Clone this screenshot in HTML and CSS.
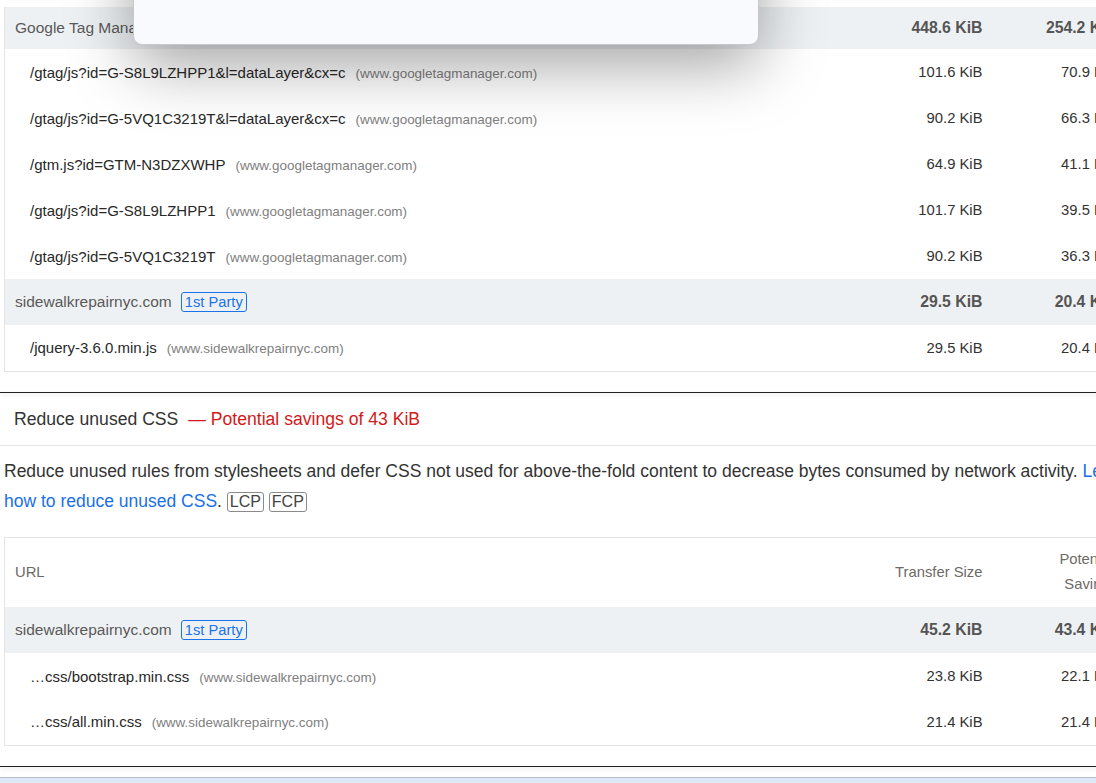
FILE: index.html
```html
<!DOCTYPE html>
<html>
<head>
<meta charset="utf-8">
<link rel="stylesheet" href="styles.css">
</head>
<body>
<div class="page">
  <div class="popup"></div>

  <section class="audit-tail">
    <table class="tbl">
      <colgroup><col class="c-url"><col class="c-num"><col class="c-sav"></colgroup>
      <tbody>
        <tr class="group first">
          <td class="url">Google Tag Manager</td>
          <td class="num">448.6 KiB</td>
          <td class="sav">254.2 KiB</td>
        </tr>
        <tr class="sub">
          <td class="url">/gtag/js?id=G-S8L9LZHPP1&amp;l=dataLayer&amp;cx=c<span class="host">(www.googletagmanager.com)</span></td>
          <td class="num">101.6 KiB</td>
          <td class="sav">70.9 KiB</td>
        </tr>
        <tr class="sub">
          <td class="url">/gtag/js?id=G-5VQ1C3219T&amp;l=dataLayer&amp;cx=c<span class="host">(www.googletagmanager.com)</span></td>
          <td class="num">90.2 KiB</td>
          <td class="sav">66.3 KiB</td>
        </tr>
        <tr class="sub">
          <td class="url">/gtm.js?id=GTM-N3DZXWHP<span class="host">(www.googletagmanager.com)</span></td>
          <td class="num">64.9 KiB</td>
          <td class="sav">41.1 KiB</td>
        </tr>
        <tr class="sub">
          <td class="url">/gtag/js?id=G-S8L9LZHPP1<span class="host">(www.googletagmanager.com)</span></td>
          <td class="num">101.7 KiB</td>
          <td class="sav">39.5 KiB</td>
        </tr>
        <tr class="sub">
          <td class="url">/gtag/js?id=G-5VQ1C3219T<span class="host">(www.googletagmanager.com)</span></td>
          <td class="num">90.2 KiB</td>
          <td class="sav">36.3 KiB</td>
        </tr>
        <tr class="group">
          <td class="url">sidewalkrepairnyc.com<span class="badge">1st Party</span></td>
          <td class="num">29.5 KiB</td>
          <td class="sav">20.4 KiB</td>
        </tr>
        <tr class="sub">
          <td class="url">/jquery-3.6.0.min.js<span class="host">(www.sidewalkrepairnyc.com)</span></td>
          <td class="num">29.5 KiB</td>
          <td class="sav">20.4 KiB</td>
        </tr>
      </tbody>
    </table>
  </section>

  <div class="sep"></div>

  <section class="audit">
    <div class="audit-head">
      <span class="title">Reduce unused CSS</span>
      <span class="savings">— Potential savings of 43 KiB</span>
    </div>
    <p class="desc">Reduce unused rules from stylesheets and defer CSS not used for above-the-fold content to decrease bytes consumed by network activity. <a class="link" href="#">Learn how to reduce unused CSS</a>. <span class="metric">LCP</span> <span class="metric">FCP</span></p>
    <table class="tbl">
      <colgroup><col class="c-url"><col class="c-num"><col class="c-sav"></colgroup>
      <thead>
        <tr class="head">
          <th class="url">URL</th>
          <th class="num">Transfer Size</th>
          <th class="sav">Potential Savings</th>
        </tr>
      </thead>
      <tbody>
        <tr class="group">
          <td class="url">sidewalkrepairnyc.com<span class="badge">1st Party</span></td>
          <td class="num">45.2 KiB</td>
          <td class="sav">43.4 KiB</td>
        </tr>
        <tr class="sub">
          <td class="url">…css/bootstrap.min.css<span class="host">(www.sidewalkrepairnyc.com)</span></td>
          <td class="num">23.8 KiB</td>
          <td class="sav">22.1 KiB</td>
        </tr>
        <tr class="sub">
          <td class="url">…css/all.min.css<span class="host">(www.sidewalkrepairnyc.com)</span></td>
          <td class="num">21.4 KiB</td>
          <td class="sav">21.4 KiB</td>
        </tr>
      </tbody>
    </table>
  </section>

  <div class="sep"></div>
  <div class="next"></div>
</div>
</body>
</html>
```

FILE: styles.css
```css
html, body {
  margin: 0;
  padding: 0;
  background: #fff;
  overflow: hidden;
}

.page {
  position: relative;
  width: 1150px;
  font-family: "Liberation Sans", Arial, sans-serif;
  color: #333;
}

.popup {
  position: absolute;
  left: 133px;
  top: -100px;
  width: 624px;
  height: 143px;
  background: #f8fafd;
  border: 1px solid #c6c8cc;
  border-radius: 0 0 9px 9px;
  box-shadow: 0 20px 64px rgba(0, 0, 0, 0.36);
  z-index: 5;
}

.audit-tail {
  padding: 7px 0 20px 4px;
}

.tbl {
  width: 1146px;
  border-collapse: collapse;
  table-layout: fixed;
  border: 1px solid #e4e4e4;
}

.audit-tail .tbl {
  border-top: none;
}

.c-url { width: auto; }
.c-num { width: 150px; }
.c-sav { width: 155px; }

.tbl td, .tbl th {
  padding: 0 12px 0 10px;
  white-space: nowrap;
  vertical-align: middle;
}

.tbl tr.group, .tbl tr.sub { height: 46px; }
.tbl tr.group.first { height: 42px; }

.tbl tr.group td {
  background: #eef1f4;
}

.tbl tr.group td.url {
  font-size: 15.5px;
  color: #5a5a5a;
}

.tbl tr.sub td.url {
  padding-left: 25px;
  font-size: 15px;
  color: #282828;
}

.host {
  margin-left: 10px;
  font-size: 13.45px;
  color: #808080;
}

.badge {
  display: inline-block;
  margin-left: 9px;
  padding: 0 3px;
  border: 1px solid #1a73e8;
  border-radius: 3px;
  color: #1a73e8;
  font-size: 14.7px;
  line-height: 18px;
}

.tbl td.num, .tbl td.sav, .tbl th.num, .tbl th.sav {
  text-align: right;
}

.tbl td.sav, .tbl th.sav {
  padding-left: 50px;
  padding-right: 32px;
}

.tbl tr.group td.num, .tbl tr.group td.sav {
  font-size: 15.8px;
  font-weight: bold;
  color: #555;
}

.tbl tr.sub td.num, .tbl tr.sub td.sav {
  font-size: 14.8px;
  color: #333;
}

.tbl tr.head {
  height: 70px;
}

.tbl th {
  font-weight: normal;
  font-size: 14.8px;
  line-height: 25px;
  color: #6d6a66;
  text-align: left;
}

.tbl th.sav {
  white-space: normal;
}

.sep {
  height: 0;
  border-top: 1px solid #202020;
  box-shadow: 0 2px 4px rgba(0, 0, 0, 0.18);
  position: relative;
  z-index: 2;
}

.audit {
  padding: 0 0 20px 0;
}

.audit-head {
  display: flex;
  align-items: center;
  gap: 10px;
  height: 51px;
  padding-top: 1px;
  padding-left: 14px;
  border-bottom: 1px solid #e6e6e6;
  font-size: 17.6px;
}

.title { color: #333; }
.savings { color: #d21a1a; }

.desc {
  margin: 10px 0 21px 0;
  padding-left: 4px;
  width: 1140px;
  font-size: 17.5px;
  line-height: 30px;
  color: #333;
}

.link {
  color: #1a6fe8;
  text-decoration: none;
}

.metric {
  display: inline-block;
  padding: 0 2px;
  border: 1px solid #8a8a8a;
  border-radius: 3px;
  font-size: 16px;
  line-height: 18px;
  color: #444;
}

.audit .tbl {
  margin-left: 4px;
}

.next {
  margin-top: 10px;
  height: 20px;
  border-top: 1px solid #b9bcc2;
  background: #dde7f7;
}
```
